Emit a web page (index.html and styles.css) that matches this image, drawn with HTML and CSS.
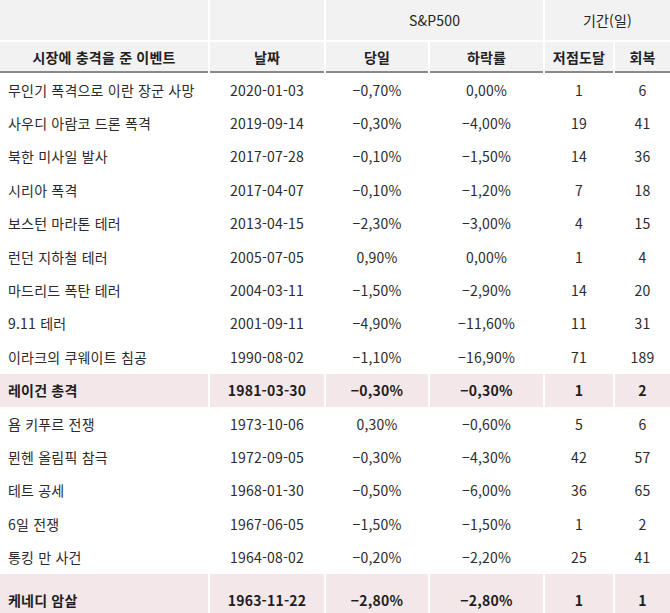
FILE: index.html
```html
<!DOCTYPE html>
<html lang="ko">
<head>
<meta charset="utf-8">
<title>시장에 충격을 준 이벤트</title>
<link rel="stylesheet" href="styles.css">
</head>
<body>
<table class="events">
  <colgroup>
    <col class="c-event"><col class="c-date"><col class="c-day"><col class="c-drop"><col class="c-low"><col class="c-rec">
  </colgroup>
  <thead>
    <tr class="top">
      <th></th><th></th>
      <th colspan="2">S&amp;P500</th>
      <th colspan="2">기간(일)</th>
    </tr>
    <tr class="sub">
      <th>시장에 충격을 준 이벤트</th><th>날짜</th><th>당일</th><th>하락률</th><th>저점도달</th><th>회복</th>
    </tr>
  </thead>
  <tbody>
    <tr><td>무인기 폭격으로 이란 장군 사망</td><td>2020-01-03</td><td>−0,70%</td><td>0,00%</td><td>1</td><td>6</td></tr>
    <tr><td>사우디 아람코 드론 폭격</td><td>2019-09-14</td><td>−0,30%</td><td>−4,00%</td><td>19</td><td>41</td></tr>
    <tr><td>북한 미사일 발사</td><td>2017-07-28</td><td>−0,10%</td><td>−1,50%</td><td>14</td><td>36</td></tr>
    <tr><td>시리아 폭격</td><td>2017-04-07</td><td>−0,10%</td><td>−1,20%</td><td>7</td><td>18</td></tr>
    <tr><td>보스턴 마라톤 테러</td><td>2013-04-15</td><td>−2,30%</td><td>−3,00%</td><td>4</td><td>15</td></tr>
    <tr><td>런던 지하철 테러</td><td>2005-07-05</td><td>0,90%</td><td>0,00%</td><td>1</td><td>4</td></tr>
    <tr><td>마드리드 폭탄 테러</td><td>2004-03-11</td><td>−1,50%</td><td>−2,90%</td><td>14</td><td>20</td></tr>
    <tr><td>9.11 테러</td><td>2001-09-11</td><td>−4,90%</td><td>−11,60%</td><td>11</td><td>31</td></tr>
    <tr><td>이라크의 쿠웨이트 침공</td><td>1990-08-02</td><td>−1,10%</td><td>−16,90%</td><td>71</td><td>189</td></tr>
    <tr class="hl"><td>레이건 총격</td><td>1981-03-30</td><td>−0,30%</td><td>−0,30%</td><td>1</td><td>2</td></tr>
    <tr><td>욤 키푸르 전쟁</td><td>1973-10-06</td><td>0,30%</td><td>−0,60%</td><td>5</td><td>6</td></tr>
    <tr><td>뮌헨 올림픽 참극</td><td>1972-09-05</td><td>−0,30%</td><td>−4,30%</td><td>42</td><td>57</td></tr>
    <tr><td>테트 공세</td><td>1968-01-30</td><td>−0,50%</td><td>−6,00%</td><td>36</td><td>65</td></tr>
    <tr><td>6일 전쟁</td><td>1967-06-05</td><td>−1,50%</td><td>−1,50%</td><td>1</td><td>2</td></tr>
    <tr><td>통킹 만 사건</td><td>1964-08-02</td><td>−0,20%</td><td>−2,20%</td><td>25</td><td>41</td></tr>
    <tr class="hl last"><td>케네디 암살</td><td>1963-11-22</td><td>−2,80%</td><td>−2,80%</td><td>1</td><td>1</td></tr>
  </tbody>
</table>
</body>
</html>
```
FILE: styles.css
```css
html, body {
  margin: 0;
  padding: 0;
  background: #ffffff;
  overflow: hidden;
}

.events {
  border-collapse: separate;
  border-spacing: 2px 0;
  margin: 0 -2px;
  width: 674px;
  table-layout: fixed;
  font-family: "Noto Sans CJK KR", "Noto Sans", sans-serif;
  font-size: 14px;
  letter-spacing: 0.2px;
  color: #2b2b2b;
}

.c-event { width: 208px; }
.c-date { width: 114px; }
.c-day { width: 102px; }
.c-drop { width: 113px; }
.c-low { width: 68px; }
.c-rec { width: 55px; }

.events th {
  background: #f2f2f2;
  padding: 0;
  text-align: center;
  color: #222222;
}

.events .top th {
  height: 40px;
  font-weight: 400;
  border-bottom: 2px solid #ffffff;
  vertical-align: middle;
}

.events .sub th {
  height: 29px;
  font-weight: 700;
  border-bottom: 2px solid #8a8a8a;
}

.events td {
  height: 33.4px;
  padding: 0;
  text-align: center;
  vertical-align: middle;
  white-space: nowrap;
}

.events td:first-child {
  text-align: left;
  padding-left: 8px;
}

.events tr.hl td {
  background: #f4e7ea;
  font-weight: 700;
  color: #1e1e1e;
}

.events tr.last td {
  height: 52px;
}
```
